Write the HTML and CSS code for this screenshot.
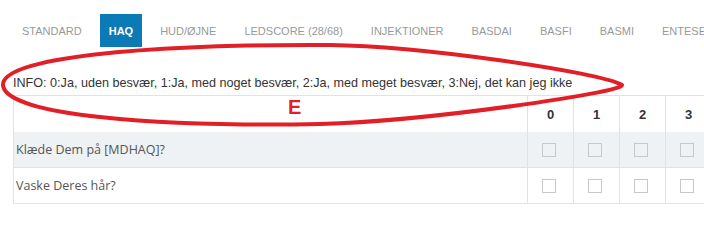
FILE: index.html
```html
<!DOCTYPE html>
<html lang="da">
<head>
<meta charset="utf-8">
<title>HAQ</title>
<link rel="stylesheet" href="styles.css">
</head>
<body>
<div class="page">
  <nav class="tabs">
    <span class="tab">STANDARD</span>
    <span class="tab active">HAQ</span>
    <span class="tab">HUD/ØJNE</span>
    <span class="tab">LEDSCORE (28/68)</span>
    <span class="tab">INJEKTIONER</span>
    <span class="tab">BASDAI</span>
    <span class="tab">BASFI</span>
    <span class="tab">BASMI</span>
    <span class="tab">ENTESEPUNKTER</span>
  </nav>
  <div class="info">INFO: 0:Ja, uden besvær, 1:Ja, med noget besvær, 2:Ja, med meget besvær, 3:Nej, det kan jeg ikke</div>
  <div class="grid">
    <div class="cell head label"></div>
    <div class="cell head num">0</div>
    <div class="cell head num">1</div>
    <div class="cell head num">2</div>
    <div class="cell head num">3</div>

    <div class="cell label alt">Klæde Dem på [MDHAQ]?</div>
    <div class="cell alt box"><span class="check"></span></div>
    <div class="cell alt box"><span class="check"></span></div>
    <div class="cell alt box"><span class="check"></span></div>
    <div class="cell alt box"><span class="check"></span></div>

    <div class="cell label">Vaske Deres hår?</div>
    <div class="cell box"><span class="check"></span></div>
    <div class="cell box"><span class="check"></span></div>
    <div class="cell box"><span class="check"></span></div>
    <div class="cell box"><span class="check"></span></div>
  </div>

  <svg class="mark" width="704" height="206" viewBox="0 0 704 206" aria-hidden="true">
    <path d="M 3 85 C 2 58, 140 44, 330 45 C 420 46, 600 72, 622 85 C 624 92, 430 121, 320 124 C 160 127, 5 116, 3 85 Z" fill="none" stroke="#e21f26" stroke-width="4" stroke-linejoin="round"/>
  </svg>
  <span class="letter">E</span>
</div>
</body>
</html>
```

FILE: styles.css
```css
html, body {
  margin: 0;
  padding: 0;
  overflow: hidden;
  background: #fff;
}

.page {
  position: relative;
  width: 704px;
  height: 206px;
  overflow: hidden;
}

.tabs {
  display: flex;
  gap: 8px;
  padding: 14px 0 0 12px;
  white-space: nowrap;
  font-family: "Liberation Sans", Arial, sans-serif;
  font-size: 11px;
  color: #999;
}

.tab {
  flex: none;
  height: 33px;
  line-height: 34px;
  padding: 0 10px;
}

.tab.active {
  background: #0b7ab5;
  color: #fff;
  font-weight: bold;
  padding: 0 9px;
}

.info {
  padding: 28px 0 0 13px;
  height: 20px;
  line-height: 16px;
  font-family: "Liberation Sans", Arial, sans-serif;
  font-size: 12.6px;
  color: #333;
  white-space: nowrap;
}

.grid {
  display: grid;
  grid-template-columns: 514px repeat(4, 46px);
  grid-auto-rows: 36px;
  margin-left: 13px;
  border-left: 1px solid #dfe3e6;
  border-top: 1px solid #dfe3e6;
  width: max-content;
}

.cell {
  border-right: 1px solid #dfe3e6;
  border-bottom: 1px solid #dfe3e6;
  display: flex;
  align-items: center;
}

.cell.head {
  height: 37px;
}

.cell.num {
  justify-content: center;
  font-family: "Liberation Sans", Arial, sans-serif;
  font-weight: bold;
  font-size: 13px;
  color: #333;
}

.cell.label {
  padding-left: 2px;
  font-family: "Open Sans", "Noto Sans", sans-serif;
  font-size: 12.5px;
  color: #555;
}

.cell.alt {
  background: #eef2f4;
}

.cell.box {
  justify-content: center;
  padding-right: 4px;
}

.check {
  width: 12px;
  height: 12px;
  border: 1px solid #c6c9cb;
  background: transparent;
}

.mark {
  position: absolute;
  left: 0;
  top: 0;
  pointer-events: none;
}

.letter {
  position: absolute;
  left: 288px;
  top: 96px;
  font-family: "Liberation Sans", Arial, sans-serif;
  font-weight: bold;
  font-size: 20px;
  color: #e21f26;
  line-height: 22px;
}
```
